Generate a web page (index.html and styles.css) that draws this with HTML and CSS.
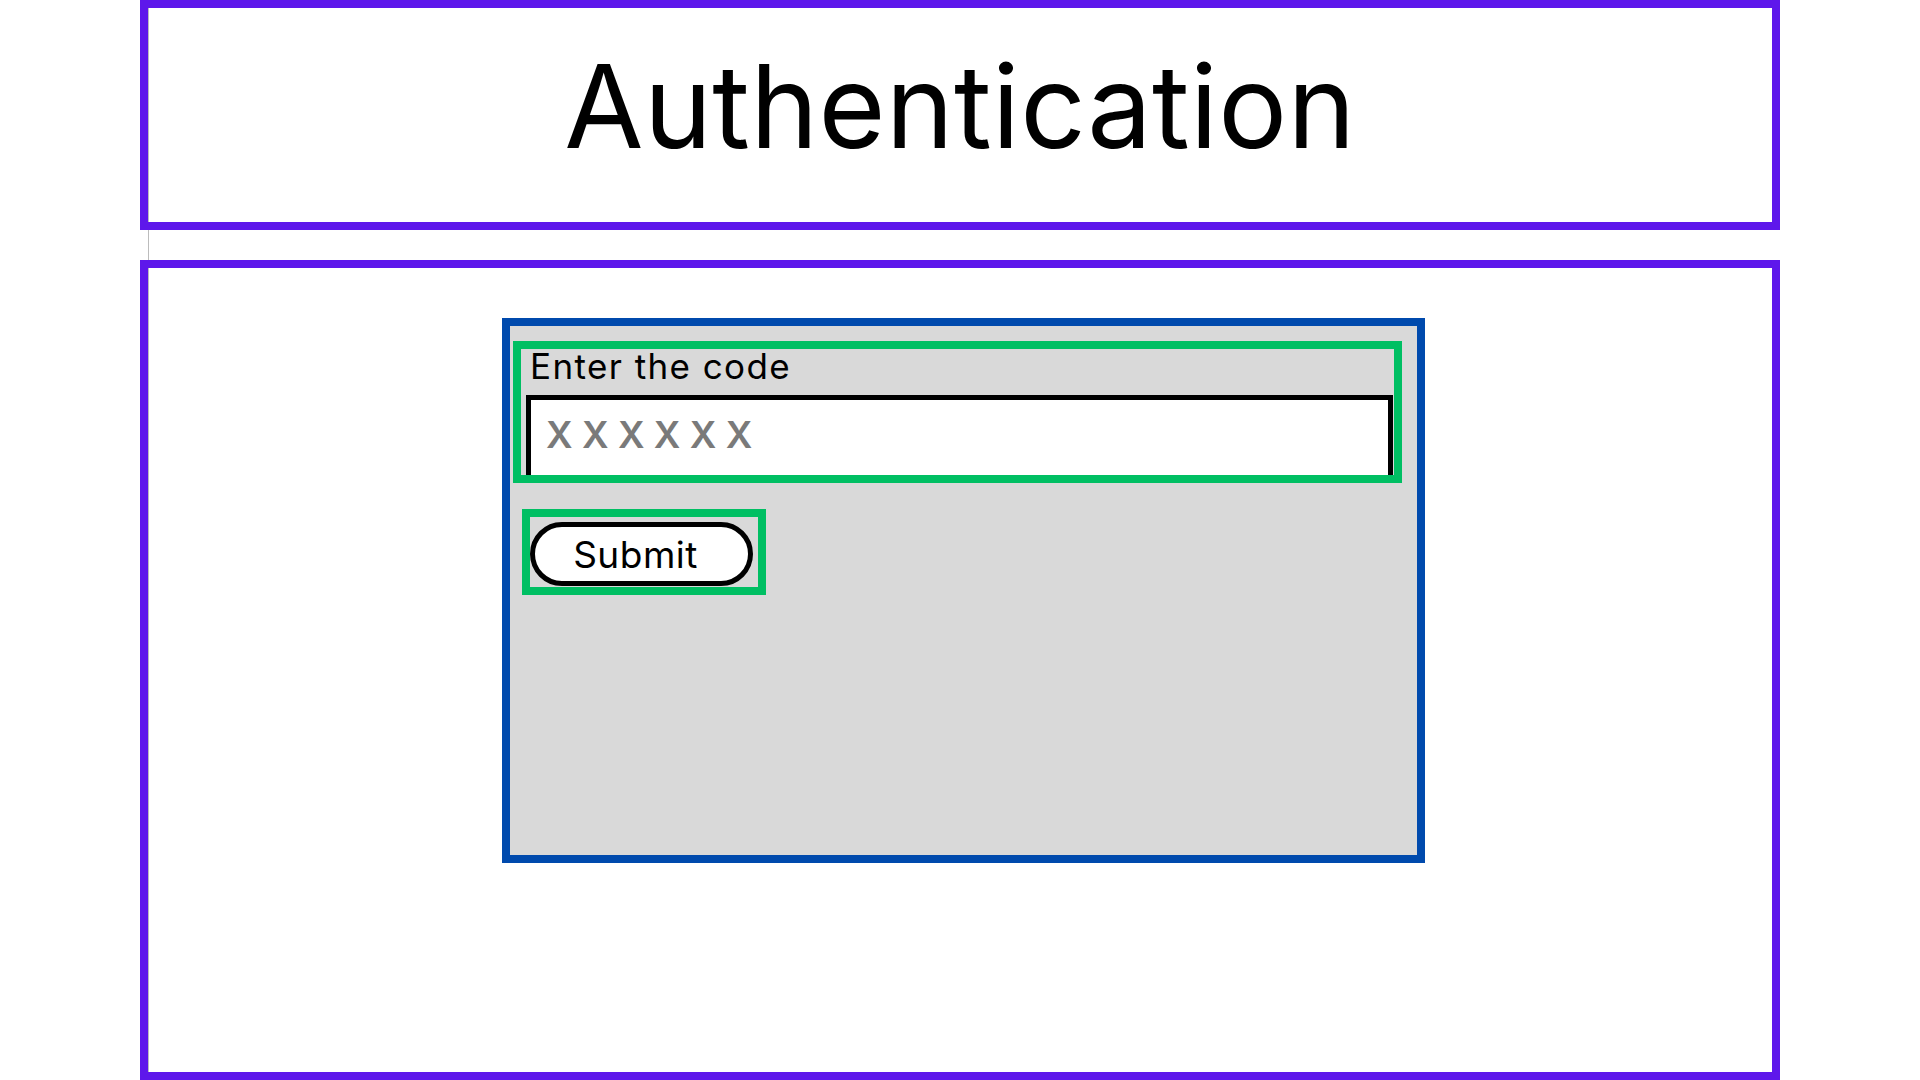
FILE: index.html
```html
<!DOCTYPE html>
<html lang="en">
<head>
<meta charset="utf-8">
<title>Authentication</title>
<link rel="stylesheet" href="styles.css">
</head>
<body>
<div class="page">
  <header class="header">
    <h1 class="title">Authentication</h1>
  </header>
  <main class="main">
    <form class="card">
      <div class="field">
        <label class="label" for="code">Enter the code</label>
        <input class="input" id="code" type="text" placeholder="X X X X X X">
      </div>
      <div class="actions">
        <button class="submit" type="button">Submit</button>
      </div>
    </form>
  </main>
</div>
</body>
</html>
```
FILE: styles.css
```css
html, body {
  margin: 0;
  padding: 0;
}
body {
  background: #ffffff linear-gradient(#bcbcbc, #bcbcbc) no-repeat 148px 0 / 1px 100%;
  font-family: Inter, "Liberation Sans", sans-serif;
  color: #000;
  height: 1080px;
  overflow: hidden;
}
.page {
  width: 1640px;
  margin: 0 auto;
  display: flex;
  flex-direction: column;
  gap: 30px;
}
.header {
  box-sizing: border-box;
  height: 230px;
  border: 8px solid #5e17eb;
  display: flex;
  justify-content: center;
  align-items: flex-start;
}
.title {
  margin: 0;
  padding-top: 30px;
  font-size: 115px;
  font-weight: 400;
  line-height: 1.2;
  letter-spacing: 0.3px;
}
.main {
  box-sizing: border-box;
  height: 820px;
  border: 8px solid #5e17eb;
  padding-top: 50px;
  padding-left: 354px;
}
.card {
  box-sizing: border-box;
  width: 923px;
  height: 545px;
  border: 8px solid #004aad;
  background: #d9d9d9;
  padding: 15px 15px 0 3px;
  display: flex;
  flex-direction: column;
}
.field {
  box-sizing: border-box;
  height: 142px;
  border: 8px solid #00bf63;
  padding: 0 1px 0 5px;
  overflow: hidden;
  display: flex;
  flex-direction: column;
}
.label {
  display: block;
  padding-left: 4px;
  font-size: 35px;
  line-height: 34px;
  letter-spacing: 1.4px;
  margin-bottom: 12px;
}
.input {
  box-sizing: border-box;
  width: 100%;
  flex: none;
  border: 5px solid #000;
  border-radius: 0;
  background: #fff;
  padding: 12px 15px 30px;
  font-family: inherit;
  font-size: 37px;
  font-weight: 600;
  line-height: normal;
  outline: none;
}
.input::placeholder {
  color: #7a7a7a;
  opacity: 1;
}
.actions {
  align-self: flex-start;
  box-sizing: border-box;
  margin: 26px 0 0 9px;
  width: 244px;
  height: 86px;
  border: 8px solid #00bf63;
  padding: 5px 5px 0 0;
}
.submit {
  box-sizing: border-box;
  display: block;
  width: 223px;
  height: 64px;
  border: 5px solid #000;
  border-radius: 32px;
  background: #fff;
  padding: 0 12px 0 0;
  font-family: inherit;
  font-size: 37px;
  line-height: 1;
  letter-spacing: 0.5px;
  color: #000;
}
```
